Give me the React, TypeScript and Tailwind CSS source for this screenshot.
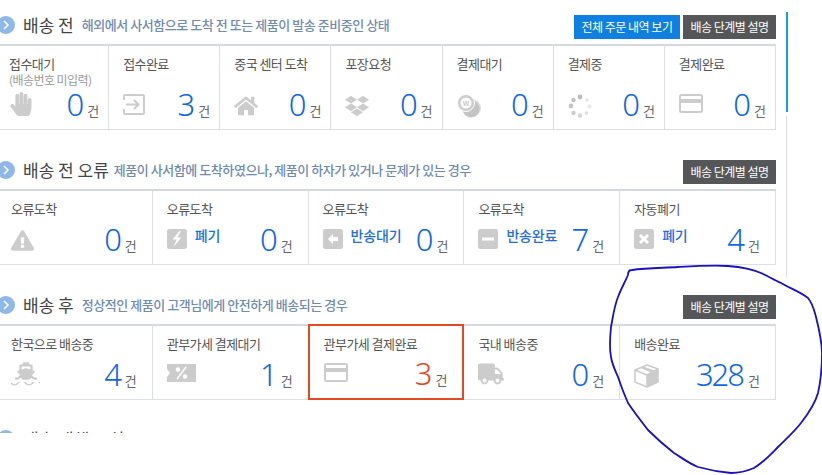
import type { ReactNode } from "react";
import { FaDropbox, FaExclamationTriangle, FaHandPaper, FaHome, FaShip, FaTruck } from "react-icons/fa";

const grey = "#cccccc";

const CardIcon = () => (
  <svg width="24" height="19" viewBox="0 0 24 19">
    <rect x="1" y="1" width="22" height="17" rx="1.5" fill="none" stroke={grey} strokeWidth="2" />
    <rect x="1" y="5" width="22" height="4" fill={grey} />
  </svg>
);

const SignIcon = () => (
  <svg width="22" height="21" viewBox="0 0 22 21" fill="none" stroke={grey} strokeWidth="2">
    <path d="M1 6V2a1 1 0 0 1 1-1h18a1 1 0 0 1 1 1v17a1 1 0 0 1-1 1H2a1 1 0 0 1-1-1v-4" />
    <path d="M3 10.5h12M11 6l4.5 4.5L11 15" />
  </svg>
);

const PayIcon = () => (
  <svg width="25" height="24" viewBox="0 0 25 24">
    <circle cx="15" cy="14" r="9" fill="#dcdcdc" />
    <circle cx="14" cy="15" r="8.5" fill="#c4c4c4" />
    <circle cx="9" cy="9" r="8.5" fill={grey} stroke="#fff" strokeWidth="1" />
    <circle cx="9" cy="9" r="5.5" fill="#fff" />
    <text x="9" y="11.5" textAnchor="middle" fontSize="7" fontWeight="700" fill={grey} fontFamily="Liberation Sans">W</text>
  </svg>
);

const SpinnerIcon = () => (
  <svg width="24" height="24" viewBox="0 0 24 24">
    <circle cx="12" cy="3" r="2.4" fill="#bdbdbd" />
    <circle cx="19" cy="6" r="1.8" fill="#e6e6e6" />
    <circle cx="21.5" cy="12.5" r="2" fill="#e6e6e6" />
    <circle cx="18.5" cy="19" r="1.8" fill="#dddddd" />
    <circle cx="12" cy="21.5" r="2.2" fill="#d4d4d4" />
    <circle cx="5.5" cy="19" r="2.2" fill="#cccccc" />
    <circle cx="3" cy="12" r="2.4" fill="#c4c4c4" />
    <circle cx="5.5" cy="6" r="2.2" fill="#c0c0c0" />
  </svg>
);

const Badge = ({ children }: { children: ReactNode }) => (
  <svg width="20" height="20" viewBox="0 0 20 20">
    <rect width="20" height="20" rx="2.5" fill={grey} />
    {children}
  </svg>
);

const BoltIcon = () => (
  <Badge>
    <path d="M12.5 2 5.5 10.5h4.2L6.5 18l8-9.5h-4.3L14 2z" fill="#fff" />
  </Badge>
);

const BackIcon = () => (
  <Badge>
    <path d="M5 10l5-5v3h5v4h-5v3z" fill="#fff" />
  </Badge>
);

const MinusIcon = () => (
  <Badge>
    <rect x="4" y="8.5" width="12" height="3" fill="#fff" />
  </Badge>
);

const CloseIcon = () => (
  <Badge>
    <path d="M6 6l8 8M14 6l-8 8" stroke="#fff" strokeWidth="3" />
  </Badge>
);

const TicketIcon = () => (
  <svg width="29" height="18" viewBox="0 0 29 18">
    <path d="M0 0h29v18H0v-5l3-4-3-4z" fill={grey} />
    <path d="M19 3 10 15" stroke="#fff" strokeWidth="1.6" />
    <circle cx="11" cy="5.5" r="2.2" fill="#fff" />
    <circle cx="18" cy="12.5" r="2.2" fill="#fff" />
  </svg>
);

const ShipIcon = () => (
  <div className="-mt-[4px] flex flex-col items-center">
    <FaShip size={22} color={grey} />
    <svg width="29" height="4" viewBox="0 0 29 4" fill="none" stroke={grey} strokeWidth="1.3">
      <path d="M0 1c2.4 2.5 4.8 2.5 7.2 0s4.8-2.5 7.2 0 4.8 2.5 7.2 0 4.8-2.5 7.4 0" />
    </svg>
  </div>
);

const BoxIcon = () => (
  <svg width="25" height="24" viewBox="0 0 25 24">
    <path d="M1 6 13 1l11 4v13l-11 5-12-5z" fill="none" stroke={grey} strokeWidth="1.6" strokeLinejoin="round" />
    <path d="M1 6l12 5 11-6M13 11v12" fill="none" stroke={grey} strokeWidth="1.6" />
    <path d="M13 11l11-6v13l-11 5z" fill={grey} />
    <path d="M6 3.8l11 4.6 3.5-1.8L9.5 2.4z" fill={grey} />
  </svg>
);

type Item = {
  label: string;
  note?: string;
  icon: ReactNode;
  status?: string;
  count: number;
  active?: boolean;
};

const waiting: Item[] = [
  { label: "접수대기", note: "(배송번호 미입력)", icon: <FaHandPaper size={24} color={grey} className="-mt-[2px]" />, count: 0 },
  { label: "접수완료", icon: <SignIcon />, count: 3 },
  { label: "중국 센터 도착", icon: <FaHome size={24} color={grey} />, count: 0 },
  { label: "포장요청", icon: <FaDropbox size={24} color={grey} />, count: 0 },
  { label: "결제대기", icon: <PayIcon />, count: 0 },
  { label: "결제중", icon: <SpinnerIcon />, count: 0 },
  { label: "결제완료", icon: <CardIcon />, count: 0 },
];

const errors: Item[] = [
  { label: "오류도착", icon: <FaExclamationTriangle size={23} color={grey} />, count: 0 },
  { label: "오류도착", icon: <BoltIcon />, status: "폐기", count: 0 },
  { label: "오류도착", icon: <BackIcon />, status: "반송대기", count: 0 },
  { label: "오류도착", icon: <MinusIcon />, status: "반송완료", count: 7 },
  { label: "자동폐기", icon: <CloseIcon />, status: "폐기", count: 4 },
];

const shipped: Item[] = [
  { label: "한국으로 배송중", icon: <ShipIcon />, count: 4 },
  { label: "관부가세 결제대기", icon: <TicketIcon />, count: 1 },
  { label: "관부가세 결제완료", icon: <CardIcon />, count: 3, active: true },
  { label: "국내 배송중", icon: <FaTruck size={26} color={grey} className="-mt-[3px]" />, count: 0 },
  { label: "배송완료", icon: <BoxIcon />, count: 328 },
];

const Heading = ({ title, desc, gap = "ml-0" }: { title: string; desc?: string; gap?: string }) => (
  <div className="flex min-w-0 items-center gap-2 pb-[5px]">
    <span className="-ml-[3px] flex h-[18px] w-[18px] items-center justify-center rounded-full bg-[#8fb8ea]">
      <svg width="8" height="10" viewBox="0 0 8 10" fill="none" stroke="#fff" strokeWidth="1.5">
        <path d="M2 1l4 4-4 4" />
      </svg>
    </span>
    <h2 className="text-[17px] leading-6 text-[#444]">{title}</h2>
    {desc && <p className={`text-[13px] font-medium tracking-[-0.45px] text-[#6f8bb1] ${gap}`}>{desc}</p>}
  </div>
);

const Cell = ({ item, pad }: { item: Item; pad: string }) => (
  <div
    className={`flex flex-col justify-between pb-[12px] pt-[9px] ${pad} ${
      item.active ? "-ml-px border-2 border-[#e4491f]" : "border-r border-b border-t-2 border-r-[#dcdfe3] border-b-[#dcdfe3] border-t-[#d5d8dd]"
    }`}
  >
    <div className="text-[13px] leading-[18px] tracking-[-0.55px] text-[#555]">
      {item.label}
      {item.note && <div className="text-xs leading-[14px] text-[#999]">{item.note}</div>}
    </div>
    <div className="flex items-end justify-between">
      <div className="flex h-[23px] items-start gap-2">
        {item.icon}
        {item.status && (
          <span className="-mt-[4px] text-sm font-medium tracking-[-0.2px] text-[#1e6fd9]">{item.status}</span>
        )}
      </div>
      <div className="flex items-baseline gap-[5px]">
        <span
          className={`font-['Noto_Sans'] text-[31px] font-light leading-[26px] tracking-[-2px] ${
            item.active ? "text-[#e4491f]" : "text-[#0f68e0]"
          }`}
        >
          {item.count}
        </span>
        <span className="text-[13px] leading-none text-[#666]">건</span>
      </div>
    </div>
  </div>
);

const Section = ({
  title,
  desc,
  items,
  actions,
  rows,
  gap,
}: {
  title: string;
  desc: string;
  items: Item[];
  actions?: ReactNode;
  rows: string;
  gap?: string;
}) => (
  <section className="mt-[30px] first:mt-[15px]">
    <div className="flex h-6 items-center justify-between">
      <Heading title={title} desc={desc} gap={gap} />
      <div className="flex gap-[3px]">
        {actions}
        <button className="h-6 w-[93px] bg-[#545658] text-xs tracking-[-0.5px] text-white">배송 단계별 설명</button>
      </div>
    </div>
    <div
      className={`mt-[5px] grid ${
        items.length === 7 ? "-ml-[2px] w-[778px] grid-cols-7" : "-ml-[3px] w-[779px] grid-cols-5"
      } ${rows}`}
    >
      {items.map((item, i) => (
        <Cell
          key={i}
          item={item}
          pad={
            items.length === 7
              ? i === 0
                ? "pl-[11px] pr-[9px]"
                : "pl-[14px] pr-[9px]"
              : "pl-[14px] pr-[15px]"
          }
        />
      ))}
    </div>
  </section>
);

export default function App() {
  return (
    <div className="relative flex h-[475px] w-[822px] overflow-hidden bg-white font-['Noto_Sans_CJK_KR',sans-serif]">
      <main className="h-[433px] w-[776px] shrink-0 overflow-hidden">
        <Section
          title="배송 전"
          desc="해외에서 사서함으로 도착 전 또는 제품이 발송 준비중인 상태"
          items={waiting}
          rows="h-[86px]"
          actions={
            <button className="h-6 w-[106px] bg-[#1080e0] text-xs tracking-[-0.5px] text-white">전체 주문 내역 보기</button>
          }
        />
        <Section
          title="배송 전 오류"
          desc="제품이 사서함에 도착하였으나, 제품이 하자가 있거나 문제가 있는 경우"
          items={errors}
          rows="h-[76px]"
          gap="-ml-[3px]"
        />
        <Section
          title="배송 후"
          desc="정상적인 제품이 고객님에게 안전하게 배송되는 경우"
          items={shipped}
          rows="h-[76px]"
        />
        <div className="mt-[27px] h-6">
          <Heading title="배송 대행 조회" />
        </div>
      </main>
      <aside className="ml-[10px] flex flex-col pt-[12px]">
        <div className="h-[100px] w-[2px] bg-[#1a9ae0]" />
        <div className="mt-[4px] h-[161px] w-px bg-[#dddddd]" />
      </aside>
      <svg className="absolute left-0 top-0" width="822" height="475" fill="none" stroke="#1a10c0" strokeWidth="1.8">
        <path d="M628 275c0-4 2-5 4-5 15-2 30-2 46-3 18-1 35-2 50-1 12 1 24 3 33 7 7 3 13 7 20 10 8 5 18 8 27 15 5 6 6 12 8 19 3 12 6 24 6 36 0 14-1 27-4 40-3 11-10 21-17 30-7 9-15 16-23 24-7 7-14 15-24 21-7 3-15 5-23 5-11-1-22-3-33-6-8-3-16-9-24-14-9-7-18-15-26-23-7-9-14-18-20-27-4-9-7-17-10-26-3-7-6-13-7-20-2-10-1-20 0-30 2-10 3-20 7-30 3-8 7-15 10-22" />
      </svg>
    </div>
  );
}
